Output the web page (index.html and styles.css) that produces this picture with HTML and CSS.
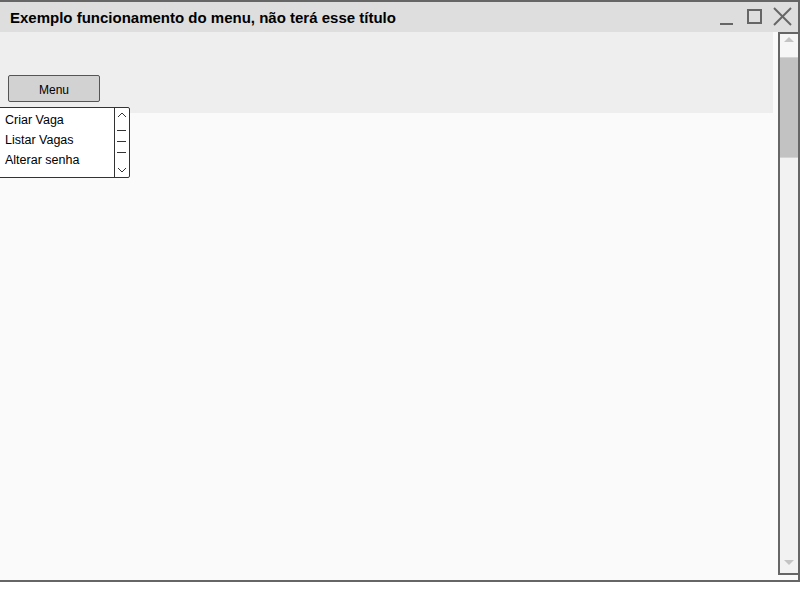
FILE: index.html
```html
<!DOCTYPE html>
<html lang="pt">
<head>
<meta charset="utf-8">
<title>Exemplo funcionamento do menu</title>
<link rel="stylesheet" href="styles.css">
</head>
<body>
<div class="window">
  <div class="titlebar">
    <span class="title">Exemplo funcionamento do menu, não terá esse título</span>
    <svg class="controls" width="83" height="30" viewBox="0 0 83 30">
      <line x1="5" y1="22" x2="18" y2="22" stroke="#666" stroke-width="2"/>
      <rect x="33" y="8" width="13" height="13" fill="none" stroke="#666" stroke-width="2"/>
      <line x1="59" y1="6" x2="76" y2="23" stroke="#666" stroke-width="2"/>
      <line x1="76" y1="6" x2="59" y2="23" stroke="#666" stroke-width="2"/>
    </svg>
  </div>
  <div class="content">
    <div class="main">
      <div class="toolbar">
        <button class="menu-btn">Menu</button>
      </div>
      <div class="dropdown">
        <ul class="items">
          <li>Criar Vaga</li>
          <li>Listar Vagas</li>
          <li>Alterar senha</li>
        </ul>
        <svg class="mini-scroll" width="14" height="69" viewBox="0 0 14 69">
          <polyline points="3,9 7,5 11,9" fill="none" stroke="#333" stroke-width="1"/>
          <line x1="2" y1="22.5" x2="11" y2="22.5" stroke="#333" stroke-width="1"/>
          <line x1="2" y1="33.5" x2="11" y2="33.5" stroke="#333" stroke-width="1"/>
          <line x1="2" y1="44.5" x2="11" y2="44.5" stroke="#333" stroke-width="1"/>
          <polyline points="3,60 7,64 11,60" fill="none" stroke="#333" stroke-width="1"/>
        </svg>
      </div>
    </div>
    <div class="scrollbar">
      <div class="arrow-area up"><span class="tri-up"></span></div>
      <div class="thumb"></div>
      <div class="track"></div>
      <div class="arrow-area down"><span class="tri-down"></span></div>
    </div>
  </div>
</div>
</body>
</html>
```

FILE: styles.css
```css
html, body {
  margin: 0;
  padding: 0;
  background: #ffffff;
}

.window {
  width: 798px;
  height: 578px;
  border-top: 2px solid #666666;
  border-bottom: 2px solid #666666;
  border-right: 2px solid #666666;
  display: flex;
  flex-direction: column;
  background: #fafafa;
}

.titlebar {
  height: 30px;
  flex: none;
  background: #dedede;
  display: flex;
  align-items: center;
  justify-content: space-between;
  padding-left: 10px;
}

.title {
  font-family: "Liberation Sans", Arial, sans-serif;
  font-weight: bold;
  font-size: 15px;
  color: #000000;
  padding-top: 1px;
}

.controls {
  display: block;
  flex: none;
}

.content {
  flex: 1;
  display: flex;
  align-items: flex-start;
}

.main {
  position: relative;
  width: 778px;
  flex: none;
}

.toolbar {
  width: 773px;
  height: 81px;
  background: #eeeeee;
  padding: 43px 0 0 8px;
  box-sizing: border-box;
}

.menu-btn {
  display: block;
  width: 92px;
  height: 27px;
  margin: 0;
  padding: 2px 0 0 0;
  background: #d2d2d2;
  border: 1.5px solid #555555;
  border-radius: 2px;
  font-family: "Liberation Sans", Arial, sans-serif;
  font-size: 12px;
  color: #000000;
}

.dropdown {
  position: absolute;
  top: 75px;
  left: -4px;
  width: 134px;
  height: 71px;
  box-sizing: border-box;
  background: #ffffff;
  border: 1px solid #333333;
  border-radius: 2px;
  display: flex;
}

.items {
  list-style: none;
  margin: 0;
  padding: 2px 0 0 8px;
  flex: 1;
  font-family: "Liberation Sans", Arial, sans-serif;
  font-size: 12.5px;
  color: #000000;
}

.items li {
  height: 20px;
  line-height: 20px;
}

.mini-scroll {
  display: block;
  flex: none;
  border-left: 1px solid #333333;
}

.scrollbar {
  width: 18px;
  height: 539px;
  flex: none;
  border-left: 2px solid #666666;
  border-top: 2px solid #666666;
  border-bottom: 2px solid #666666;
  background: #f2f2f2;
  display: flex;
  flex-direction: column;
}

.arrow-area {
  flex: none;
  display: flex;
  justify-content: center;
}

.arrow-area.up {
  height: 23px;
  padding-top: 3px;
  box-sizing: border-box;
  background: #f6f6f6;
}

.arrow-area.down {
  height: 16px;
  padding-top: 3px;
  box-sizing: border-box;
}

.tri-up {
  width: 0;
  height: 0;
  border-left: 5px solid transparent;
  border-right: 5px solid transparent;
  border-bottom: 5px solid #c4c4c4;
}

.tri-down {
  width: 0;
  height: 0;
  border-left: 5px solid transparent;
  border-right: 5px solid transparent;
  border-top: 5px solid #c4c4c4;
}

.thumb {
  height: 101px;
  flex: none;
  background: #c2c2c2;
  border-top: 1px solid #d4d4d4;
  border-bottom: 1px solid #d4d4d4;
  box-sizing: border-box;
}

.track {
  flex: 1;
}
```
